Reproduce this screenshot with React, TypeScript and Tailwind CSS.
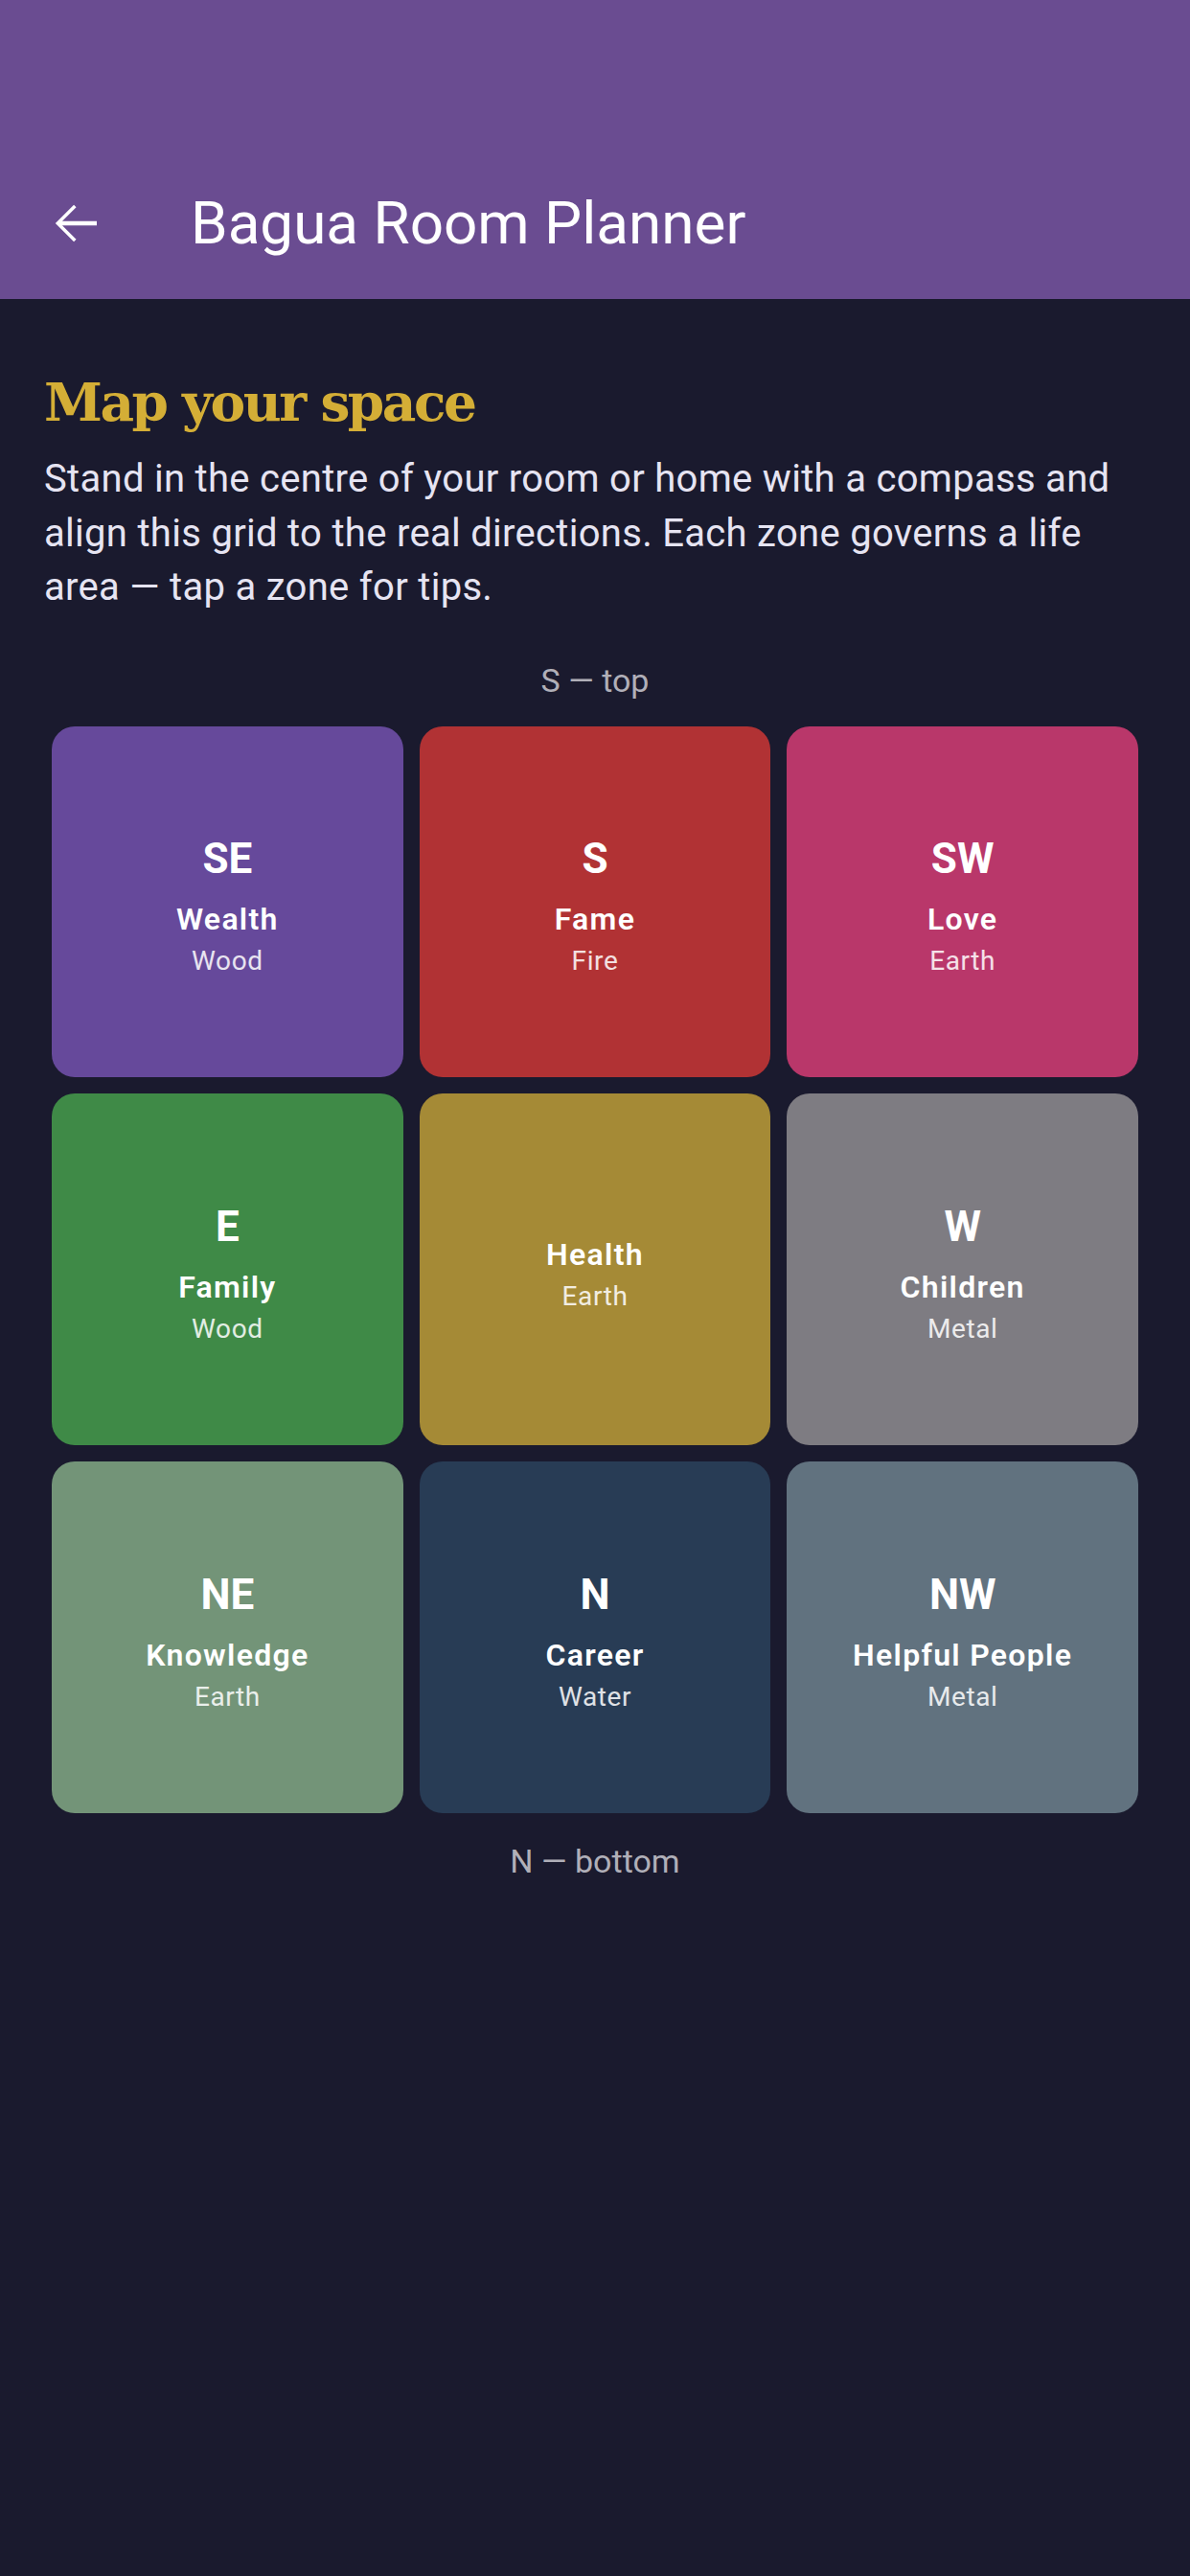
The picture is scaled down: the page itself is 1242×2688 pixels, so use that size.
import React from "react";

type Zone = { dir?: string; label: string; element: string; bg: string };

const zones: Zone[] = [
  { dir: "SE", label: "Wealth", element: "Wood", bg: "bg-[#66499b]" },
  { dir: "S", label: "Fame", element: "Fire", bg: "bg-[#b13234]" },
  { dir: "SW", label: "Love", element: "Earth", bg: "bg-[#b9376a]" },
  { dir: "E", label: "Family", element: "Wood", bg: "bg-[#3f8a47]" },
  { label: "Health", element: "Earth", bg: "bg-[#a58a36]" },
  { dir: "W", label: "Children", element: "Metal", bg: "bg-[#7e7c82]" },
  { dir: "NE", label: "Knowledge", element: "Earth", bg: "bg-[#739478]" },
  { dir: "N", label: "Career", element: "Water", bg: "bg-[#283c55]" },
  { dir: "NW", label: "Helpful People", element: "Metal", bg: "bg-[#61727f]" },
];

function ZoneCell({ z }: { z: Zone }) {
  return (
    <div
      className={`${z.bg} aspect-square rounded-[24px] pt-[10px] flex flex-col items-center justify-center text-white`}
    >
      {z.dir && (
        <div className="text-[44px] leading-[52px] font-bold">{z.dir}</div>
      )}
      <div
        className={`${z.dir ? "mt-[17px]" : ""} text-[32px] leading-[40px] font-semibold tracking-[1.3px]`}
      >
        {z.label}
      </div>
      <div className="mt-[6px] text-[28px] leading-[36px] tracking-[0.6px] text-white/85">
        {z.element}
      </div>
    </div>
  );
}

export default function App() {
  return (
    <div
      className="min-h-[2688px] w-full bg-[#1a1a2e]"
      style={{ fontFamily: "Roboto, 'Noto Sans', sans-serif" }}
    >
      <header className="h-[312px] bg-[#6a4c91] flex items-end">
        <div className="h-[158px] w-full flex items-center">
          <svg
            className="ml-[46px] w-[66px] h-[66px] shrink-0"
            viewBox="0 0 24 24"
            fill="#ffffff"
          >
            <path d="M20 11.2H6.9l5.3-5.3L11.3 5l-7 7 7 7 .9-.9-5.3-5.3H20v-1.6z" />
          </svg>
          <h1 className="ml-[87px] text-[62px] text-white font-normal leading-none">
            Bagua Room Planner
          </h1>
        </div>
      </header>

      <main className="px-[46px]">
        <h2
          className="mt-[76px] text-[55px] leading-[64px] font-bold text-[#d4ae36] tracking-[-2.5px]"
          style={{ fontFamily: "'DejaVu Serif', 'Liberation Serif', serif" }}
        >
          Map your space
        </h2>
        <p className="mt-[20px] text-[40px] leading-[56.5px] text-[#e6e4f2] tracking-[0.3px]">
          Stand in the centre of your room or home with a compass and align this
          grid to the real directions. Each zone governs a life area — tap a zone
          for tips.
        </p>

        <div className="mt-[48px] text-center text-[34px] leading-[40px] text-[#b0afb8]">
          S — top
        </div>

        <div className="mt-[28px] px-[8px] grid grid-cols-3 gap-[17px]">
          {zones.map((z) => (
            <ZoneCell key={z.label} z={z} />
          ))}
        </div>

        <div className="mt-[30px] text-center text-[34px] leading-[40px] text-[#b0afb8]">
          N — bottom
        </div>
      </main>
    </div>
  );
}
